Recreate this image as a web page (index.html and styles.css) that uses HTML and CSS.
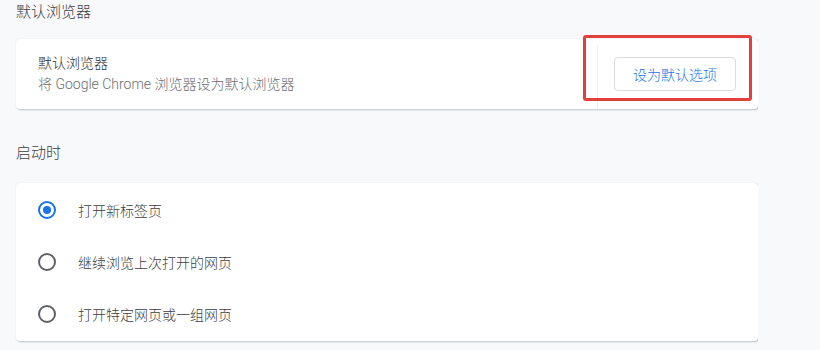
FILE: index.html
```
<!DOCTYPE html>
<html lang="zh-CN">
<head>
<meta charset="utf-8">
<title>设置</title>
<link rel="stylesheet" href="styles.css">
</head>
<body>
<main class="page">
  <h2 class="section-title first">默认浏览器</h2>
  <section class="card default-card">
    <div class="default-text">
      <div class="row-title">默认浏览器</div>
      <div class="row-sub">将 Google Chrome 浏览器设为默认浏览器</div>
    </div>
    <div class="sep"></div>
    <button class="btn">设为默认选项</button>
    <div class="highlight"></div>
  </section>

  <h2 class="section-title">启动时</h2>
  <section class="card radio-card">
    <label class="radio-row"><span class="radio checked"></span><span class="radio-label">打开新标签页</span></label>
    <label class="radio-row"><span class="radio"></span><span class="radio-label">继续浏览上次打开的网页</span></label>
    <label class="radio-row"><span class="radio"></span><span class="radio-label">打开特定网页或一组网页</span></label>
  </section>
</main>
</body>
</html>
```
FILE: styles.css
```
html, body {
  margin: 0;
  padding: 0;
  background: #f8f9fa;
  font-family: Roboto, "Noto Sans CJK SC", sans-serif;
  color: #3c4043;
}
.page {
  width: 742px;
  padding-left: 16px;
  height: 350px;
  overflow: hidden;
}
.section-title {
  margin: 0;
  font-size: 15px;
  font-weight: 300;
  color: #3c4043;
  line-height: 24px;
  height: 24px;
  padding-top: 32px;
  padding-bottom: 18px;
}
.section-title.first {
  padding-top: 0;
  padding-bottom: 15px;
}
.card {
  background: #fff;
  border-radius: 4px;
  box-shadow: 1px 1px 2px rgba(60, 64, 67, 0.28), 0 0 1px rgba(60, 64, 67, 0.15);
  position: relative;
}
.default-card {
  height: 70px;
  display: flex;
  align-items: center;
  padding: 0 22px;
}
.default-text {
  flex: 1;
  font-size: 14px;
  line-height: 21px;
  font-weight: 300;
}
.row-title { color: #2f3033; }
.row-sub { color: #6b6e72; }
.sep {
  width: 1px;
  align-self: stretch;
  margin: 6px 16px 0 0;
  background: #eeeff1;
}
.btn {
  height: 34px;
  width: 122px;
  border: 1px solid #dadce0;
  border-radius: 4px;
  background: #fff;
  color: #1a73e8;
  font-family: Roboto, "Noto Sans CJK SC", sans-serif;
  font-size: 14px;
  font-weight: 300;
  padding: 0;
}
.highlight {
  position: absolute;
  left: 567px;
  top: -4px;
  width: 163px;
  height: 60px;
  border: 3px solid #e2403b;
  border-radius: 3px;
  pointer-events: none;
}
.radio-card {
  height: 158px;
  padding-top: 1px;
  box-sizing: border-box;
}
.radio-row {
  display: flex;
  align-items: center;
  height: 52px;
  padding-left: 22px;
  font-size: 14px;
  font-weight: 300;
  color: #3c4043;
}
.radio {
  box-sizing: border-box;
  width: 18px;
  height: 18px;
  border-radius: 50%;
  border: 2px solid #5f6368;
  margin-right: 22px;
  display: flex;
  align-items: center;
  justify-content: center;
}
.radio.checked {
  border-color: #1a73e8;
}
.radio.checked::after {
  content: "";
  width: 8px;
  height: 8px;
  border-radius: 50%;
  background: #1a73e8;
}
```
